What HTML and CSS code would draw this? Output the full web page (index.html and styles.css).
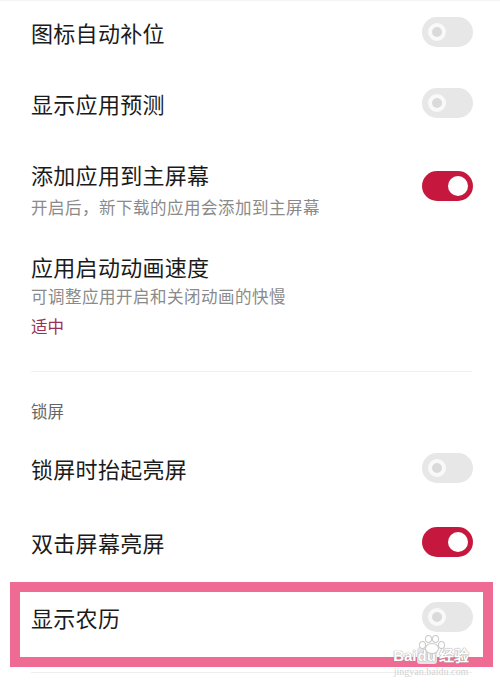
FILE: index.html
```html
<!DOCTYPE html>
<html lang="zh-CN">
<head>
    <meta charset="UTF-8">
    <meta name="viewport" content="width=device-width, initial-scale=1.0">
    <title>桌面与锁屏设置</title>
    <link rel="stylesheet" href="styles.css">
</head>
<body>
    <div class="settings">
        <div class="row row-first">
            <div class="title">图标自动补位</div>
            <span class="switch"></span>
        </div>
        <div class="row row-tall">
            <div class="title">显示应用预测</div>
            <span class="switch"></span>
        </div>
        <div class="row row-multi row-add">
            <div class="text">
                <div class="title">添加应用到主屏幕</div>
                <div class="sub sub-gap">开启后，新下载的应用会添加到主屏幕</div>
            </div>
            <span class="switch on"></span>
        </div>
        <div class="row row-multi row-speed">
            <div class="text">
                <div class="title">应用启动动画速度</div>
                <div class="sub">可调整应用开启和关闭动画的快慢</div>
                <div class="value">适中</div>
            </div>
        </div>
        <div class="divider"></div>
        <div class="section">锁屏</div>
        <div class="row row-lift">
            <div class="title">锁屏时抬起亮屏</div>
            <span class="switch"></span>
        </div>
        <div class="row">
            <div class="title">双击屏幕亮屏</div>
            <span class="switch on"></span>
        </div>
        <div class="highlight">
            <div class="row row-box">
                <div class="title">显示农历</div>
                <span class="switch"></span>
            </div>
        </div>
        <div class="divider divider-low"></div>
    </div>
    <div class="watermark">
        <div class="paw">
            <span class="toe t1"></span><span class="toe t2"></span><span class="toe t3"></span><span class="toe t4"></span><span class="pad"></span>
        </div>
        <div class="brand">Bai<span class="du">du</span>经验</div>
        <div class="site">jingyan.baidu.com</div>
    </div>
</body>
</html>
```

FILE: styles.css
```css
body {
    margin: 0;
    padding: 0;
    background: #fff;
    font-family: "Noto Sans CJK SC", "Noto Sans", sans-serif;
    color: #1b1b1b;
    width: 500px;
    height: 694px;
    overflow: hidden;
    position: relative;
}
.settings {
    border-top: 1px solid #f4f4f4;
}
.row {
    display: flex;
    align-items: center;
    justify-content: space-between;
    height: 64px;
    padding: 0 27px 0 31px;
}
.row-first {
    height: 62px;
}
.row-tall {
    height: 80px;
}
.row-lift {
    height: 84px;
}
.row-multi {
    height: auto;
    align-items: flex-start;
}
.row-add {
    padding-top: 16px;
    padding-bottom: 13px;
}
.row-speed {
    padding-top: 16px;
    padding-bottom: 30px;
}
.row-multi .switch {
    margin-top: 12px;
}
.title {
    font-size: 22px;
    line-height: 30px;
    letter-spacing: 0.3px;
}
.sub {
    font-size: 16.5px;
    line-height: 30px;
    color: #8a8a8a;
    letter-spacing: 0.5px;
}
.sub-gap {
    margin-top: 3px;
}
.value {
    font-size: 16.5px;
    line-height: 30px;
    color: #9d2f52;
}
.divider {
    height: 1px;
    background: #efefef;
    margin: 0 28px 0 31px;
}
.divider-low {
    margin-top: 5px;
}
.section {
    margin-top: 24px;
    padding-left: 31px;
    font-size: 16.5px;
    line-height: 30px;
    color: #666;
}
.switch {
    position: relative;
    flex: none;
    width: 51px;
    height: 30px;
    border-radius: 15px;
    background: #e7e7e7;
}
.switch::after {
    content: "";
    position: absolute;
    left: 6px;
    top: 6px;
    width: 10px;
    height: 10px;
    border-radius: 50%;
    background: #dadada;
    border: 4px solid #f9f9f9;
}
.switch.on {
    background: #c6183e;
}
.switch.on::after {
    left: auto;
    right: 5px;
    top: 5px;
    width: 20px;
    height: 20px;
    border: none;
    background: #fff;
}
.highlight {
    margin: 8px 7px 0 10px;
    border: 10px solid #ef6b93;
}
.row-box {
    height: 50px;
    padding: 0 10px 15px 11px;
}
.watermark {
    position: absolute;
    left: 385px;
    top: 638px;
    width: 92px;
    text-align: center;
    font-family: "Liberation Sans", sans-serif;
}
.paw {
    position: relative;
    width: 30px;
    height: 17px;
    margin: -4px auto 0;
}
.toe, .pad {
    position: absolute;
    border: 1px solid #c9c9c9;
    background: #fff;
    border-radius: 50%;
}
.toe {
    width: 5px;
    height: 6px;
}
.t1 { left: 3px; top: 7px; }
.t2 { left: 9px; top: 1px; }
.t3 { left: 16px; top: 1px; }
.t4 { left: 22px; top: 7px; }
.pad {
    left: 9px;
    top: 9px;
    width: 12px;
    height: 9px;
}
.brand {
    margin-top: -3px;
    font-size: 15px;
    line-height: 16px;
    font-weight: bold;
    color: #fff;
    text-shadow: 0 0 1px #999, 0 0 1px #999;
}
.du {
    padding: 0 1px;
    margin-right: 2px;
    border-radius: 3px;
    background: #e6e6e6;
    color: #fff;
}
.site {
    font-size: 10px;
    line-height: 16px;
    color: #d2d2d2;
    font-family: "Liberation Serif", serif;
}
```
